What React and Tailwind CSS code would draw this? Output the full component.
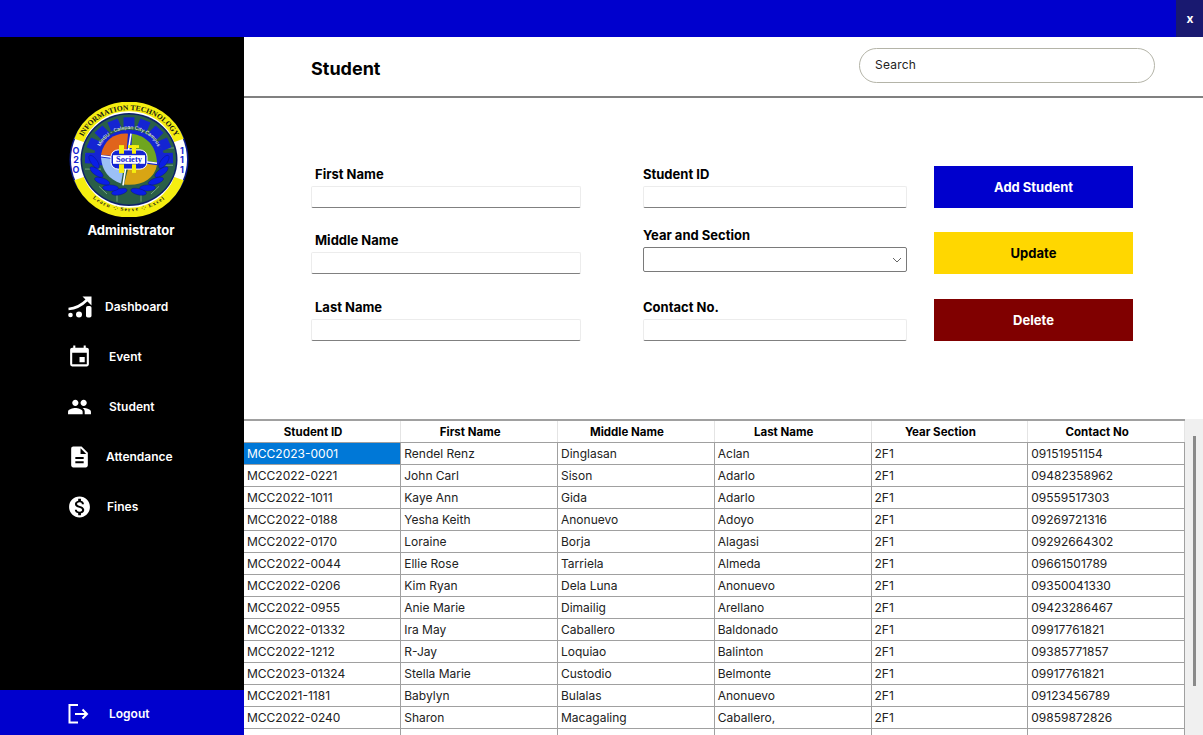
import { MdEvent, MdPeople, MdDescription, MdMonetizationOn } from 'react-icons/md';

const students = [
    ['MCC2023-0001', 'Rendel Renz', 'Dinglasan', 'Aclan', '2F1', '09151951154'],
    ['MCC2022-0221', 'John Carl', 'Sison', 'Adarlo', '2F1', '09482358962'],
    ['MCC2022-1011', 'Kaye Ann', 'Gida', 'Adarlo', '2F1', '09559517303'],
    ['MCC2022-0188', 'Yesha Keith', 'Anonuevo', 'Adoyo', '2F1', '09269721316'],
    ['MCC2022-0170', 'Loraine', 'Borja', 'Alagasi', '2F1', '09292664302'],
    ['MCC2022-0044', 'Ellie Rose', 'Tarriela', 'Almeda', '2F1', '09661501789'],
    ['MCC2022-0206', 'Kim Ryan', 'Dela Luna', 'Anonuevo', '2F1', '09350041330'],
    ['MCC2022-0955', 'Anie Marie', 'Dimailig', 'Arellano', '2F1', '09423286467'],
    ['MCC2022-01332', 'Ira May', 'Caballero', 'Baldonado', '2F1', '09917761821'],
    ['MCC2022-1212', 'R-Jay', 'Loquiao', 'Balinton', '2F1', '09385771857'],
    ['MCC2023-01324', 'Stella Marie', 'Custodio', 'Belmonte', '2F1', '09917761821'],
    ['MCC2021-1181', 'Babylyn', 'Bulalas', 'Anonuevo', '2F1', '09123456789'],
    ['MCC2022-0240', 'Sharon', 'Macagaling', 'Caballero,', '2F1', '09859872826'],
    ['', '', '', '', '', ''],
];

const headers = ['Student ID', 'First Name', 'Middle Name', 'Last Name', 'Year Section', 'Contact No'];

const DashIcon = () => (
    <svg width="24" height="22" viewBox="0 0 24 22" fill="white">
        <circle cx="2.5" cy="19" r="2.3" />
        <circle cx="11" cy="18.5" r="3" />
        <rect x="18" y="10" width="5.5" height="11.5" rx="1.8" />
        <path d="M0.5 13 C8 12.5 14 9 19.5 3.5" fill="none" stroke="white" strokeWidth="2.6" />
        <path d="M14.5 0.5 H23.5 V9.5 Z" />
    </svg>
);

const LogoutIcon = () => (
    <svg width="21" height="20" viewBox="0 0 21 20" fill="none" stroke="white" strokeWidth="2">
        <path d="M10 1 H1.5 V18.5 H10" />
        <path d="M7 10 H19 M14.5 5.5 L19 10 L14.5 14.5" />
    </svg>
);

const navItems = [
    { label: 'Dashboard', icon: <DashIcon />, gap: 'ml-[13px]' },
    { label: 'Event', icon: <MdEvent size={26} color="white" />, gap: 'ml-[17px]' },
    { label: 'Student', icon: <MdPeople size={26} color="white" />, gap: 'ml-[17px]' },
    { label: 'Attendance', icon: <MdDescription size={26} color="white" />, gap: 'ml-[14px]' },
    { label: 'Fines', icon: <MdMonetizationOn size={26} color="white" />, gap: 'ml-[15px]' },
];

const leafAngles = [4, 22, 40, 58, 74, 106, 122, 140, 158, 176];

const Logo = () => (
    <svg width="120" height="115" viewBox="-60 -60 120 120" preserveAspectRatio="none">
        <defs>
            <path id="topArc" d="M-50 -14 A52 52 0 0 1 50 -14" />
            <path id="bottomArc" d="M-53 16 A56 56 0 0 0 53 16" />
            <path id="gearArc" d="M-31 -6 A31.5 31.5 0 0 1 31 -6" />
        </defs>
        <circle r="59.5" fill="#0a1a8c" />
        <circle r="58" fill="#ffffff" />
        <path d="M-50 -20 A53 53 0 0 1 50 -20" fill="none" stroke="#f5ee10" strokeWidth="10" />
        <path d="M-50 20 A53 53 0 0 0 50 20" fill="none" stroke="#f5ee10" strokeWidth="10" />
        <circle r="48.5" fill="#0b1f6b" />
        <circle r="47" fill="#2a5f48" />
        <path d="M-44 -6 H-30 M-44 10 H-28 M30 -12 H45 M30 6 H44 M-12 44 V30 M12 44 V30 M-30 28 L-22 36 M30 28 L22 36" stroke="#86b68a" strokeWidth="0.8" />
        {Array.from({ length: 9 }).map((_, i) => (
            <rect key={i} x="-5.5" y="-44" width="11" height="10" fill="#1424d2" transform={`rotate(${-88 + i * 22})`} />
        ))}
        <path d="M-37 6 A37 37 0 1 1 37 6 Z" fill="#1424d2" />
        <text fontSize="5" fill="white" fontFamily="Inter, sans-serif">
            <textPath href="#gearArc" startOffset="50%" textAnchor="middle">MinSU - Calapan City Campus</textPath>
        </text>
        <path d="M-1 -27 C-15 -28 -25 -20 -28 -5 L-3 -2 Z" fill="#e0641c" />
        <path d="M3 -27 C17 -25 27 -15 28 3 L2 -1 Z" fill="#6fa51f" />
        <path d="M-28 -2 L-4 1 L-8 25 C-20 21 -27 12 -28 -2 Z" fill="#9cc0f6" />
        <path d="M1 2 L28 6 C25 21 12 28 -5 26 Z" fill="#d8a514" />
        <path d="M2 -27 L-6 27 M-28 -4 L28 4" stroke="white" strokeWidth="1.6" />
        {leafAngles.map((a) => (
            <ellipse key={a} cx="35" cy="0" rx="8" ry="3.2" fill="#0a1ee6" stroke="#081078" strokeWidth="0.4" transform={`rotate(${a}) rotate(${a < 90 ? -60 : 60} 35 0)`} />
        ))}
        <rect x="-18" y="-10" width="36" height="20" rx="7" fill="#1424d2" stroke="white" strokeWidth="1" />
        <rect x="-10" y="-15" width="5" height="9" fill="#f5ee10" />
        <rect x="-1" y="-15" width="11" height="3" fill="#f5ee10" />
        <rect x="3" y="-15" width="4" height="9" fill="#f5ee10" />
        <rect x="-10" y="5" width="5" height="9" fill="#f5ee10" />
        <rect x="3" y="5" width="4" height="9" fill="#f5ee10" />
        <rect x="-16" y="-4.5" width="32" height="9" fill="white" />
        <text x="0" y="2.8" fontSize="8.5" fontWeight="800" fill="#1424d2" textAnchor="middle" fontFamily="'Liberation Serif', serif">Society</text>
        <text fontSize="7.6" fontWeight="700" fill="#161616" fontFamily="'Liberation Serif', serif">
            <textPath href="#topArc" startOffset="50%" textAnchor="middle">INFORMATION TECHNOLOGY</textPath>
        </text>
        <text fontSize="5.5" fontWeight="700" fill="#161616" fontFamily="'Liberation Serif', serif" letterSpacing="1.2">
            <textPath href="#bottomArc" startOffset="50%" textAnchor="middle">Learn ⁘ Serve ⁘ Excel</textPath>
        </text>
        <g fontSize="9" fontWeight="700" fill="#1424d2" textAnchor="middle" fontFamily="Inter, sans-serif">
            <text x="-53" y="-6">O</text>
            <text x="-53" y="4">2</text>
            <text x="-53" y="14">O</text>
            <text x="53" y="-6">1</text>
            <text x="53" y="4">1</text>
            <text x="53" y="14">1</text>
        </g>
    </svg>
);

const Field = ({ label, className = '', inset = true }) => (
    <div className={`flex flex-col ${className}`}>
        <label className={`text-[13px] font-bold text-black leading-[18px] mb-[3px] ${inset ? 'pl-1' : ''}`}>{label}</label>
        <div className="h-[22px] bg-white border border-[#ececec] border-b-[#808080] rounded-[2px]" />
    </div>
);

const App = () => {
    return (
        <div className="w-[1203px] h-[735px] overflow-hidden flex flex-col bg-white font-['Inter',sans-serif] text-black">
            <div className="h-[37px] shrink-0 bg-[#0000cd] flex justify-end">
                <button className="w-[27px] pl-[1px] bg-[#191970] text-white text-[12px] font-bold">x</button>
            </div>
            <div className="flex flex-1 min-h-0">
                <aside className="w-[244px] shrink-0 bg-black flex flex-col">
                    <div className="flex justify-center pt-[65px] pl-[14px]">
                        <Logo />
                    </div>
                    <p className="text-center text-white text-[13px] font-bold mt-[4px] pl-[18px] leading-[18px]">Administrator</p>
                    <nav className="mt-[43px] flex flex-col">
                        {navItems.map((item) => (
                            <div key={item.label} className="h-[50px] flex items-center pl-[67px]">
                                <span className="w-[25px] flex justify-center">{item.icon}</span>
                                <span className={`${item.gap} text-white text-[12px] font-semibold`}>{item.label}</span>
                            </div>
                        ))}
                    </nav>
                    <div className="mt-auto h-[45px] bg-[#0000cd] flex items-center pl-[68px] pt-[2px]">
                        <LogoutIcon />
                        <span className="ml-[20px] text-white text-[12px] font-semibold">Logout</span>
                    </div>
                </aside>
                <main className="flex-1 min-w-0 flex flex-col">
                    <header className="h-[61px] shrink-0 border-b-2 border-[#808080] flex items-center justify-between pl-[67px] pr-[48px]">
                        <h1 className="text-[18px] font-bold mt-[4px]">Student</h1>
                        <div className="w-[296px] h-[35px] mb-[2px] pb-[1px] rounded-full border border-[#b4b4a8] flex items-center pl-[15px] text-[12px] tracking-[0.2px] text-[#222]">Search</div>
                    </header>
                    <section className="h-[321px] shrink-0 flex pl-[67px] pt-[67px]">
                        <div className="w-[270px] flex flex-col">
                            <Field label="First Name" />
                            <Field label="Middle Name" className="mt-[23px]" />
                            <Field label="Last Name" className="mt-[24px]" />
                        </div>
                        <div className="w-[264px] ml-[62px] flex flex-col">
                            <Field label="Student ID" inset={false} />
                            <div className="flex flex-col mt-[18px]">
                                <label className="text-[13px] font-bold leading-[18px] mb-[3px]">Year and Section</label>
                                <div className="h-[25px] border border-[#7a7a7a] rounded-[2px] flex items-center justify-end pr-[4px]">
                                    <svg width="10" height="6" viewBox="0 0 10 6" fill="none" stroke="#666" strokeWidth="1">
                                        <path d="M1 1 L5 5 L9 1" />
                                    </svg>
                                </div>
                            </div>
                            <Field label="Contact No." className="mt-[26px]" inset={false} />
                        </div>
                        <div className="w-[199px] ml-[27px] flex flex-col gap-[24px] mt-[1px] text-[13px] font-bold">
                            <button className="h-[42px] pt-[2px] bg-[#0000cd] text-white">Add Student</button>
                            <button className="h-[42px] pt-[2px] bg-[#ffd700] text-black">Update</button>
                            <button className="h-[42px] pt-[2px] bg-[#800000] text-white mt-[1px]">Delete</button>
                        </div>
                    </section>
                    <div className="flex flex-1 min-h-0 overflow-hidden">
                        <table className="w-[941px] h-fit table-fixed border-collapse text-[12px] border-t-2 border-[#a0a0a0]">
                            <thead>
                                <tr className="h-[22px]">
                                    {headers.map((h) => (
                                        <th key={h} className="font-bold text-[11.5px] text-center p-0 pr-[18px] pt-[2px] border-b border-[#a0a0a0] border-r border-r-[#e4e4e4]">{h}</th>
                                    ))}
                                </tr>
                            </thead>
                            <tbody>
                                {students.map((row, i) => (
                                    <tr key={i} className="h-[22px]">
                                        {row.map((cell, j) => (
                                            <td
                                                key={j}
                                                className={`p-0 pl-[3px] pt-[2px] border border-[#a0a0a0] border-l-0 whitespace-nowrap ${i === 0 && j === 0 ? 'bg-[#0078d7] text-white' : 'text-[#222]'}`}
                                            >
                                                {cell}
                                            </td>
                                        ))}
                                    </tr>
                                ))}
                            </tbody>
                        </table>
                        <div className="w-[18px] shrink-0 bg-[#f0f0f0] pt-[17px] pl-[8px]">
                            <div className="w-[3px] h-[250px] bg-[#8a8a8a]" />
                        </div>
                    </div>
                </main>
            </div>
        </div>
    );
};

export default App;
